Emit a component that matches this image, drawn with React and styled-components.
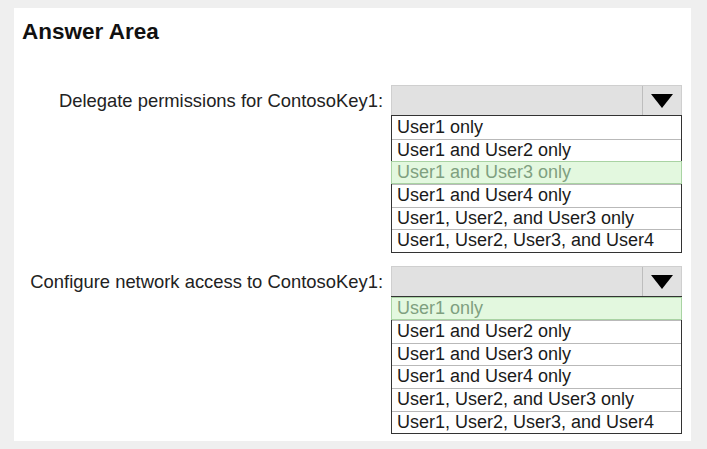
import React from 'react'
import styled, { createGlobalStyle } from 'styled-components'

const GlobalStyle = createGlobalStyle`
  html, body {
    margin: 0;
    padding: 0;
    background: #efefef;
    font-family: 'Liberation Sans', Arial, sans-serif;
  }
`

const Page = styled.div`
  width: 707px;
  height: 449px;
  padding: 8px 16px 8px 14px;
  box-sizing: border-box;
`

const Panel = styled.div`
  background: #fff;
  height: 100%;
  padding: 11px 0 0 8px;
  box-sizing: border-box;
`

const Title = styled.h2`
  margin: 0;
  font-size: 22.5px;
  font-weight: bold;
  color: #111;
`

const Form = styled.div`
  display: grid;
  grid-template-columns: 361px 291px;
  column-gap: 8px;
  row-gap: 13px;
  margin-top: 40px;
  align-items: start;
`

const Label = styled.div`
  text-align: right;
  font-size: 18.4px;
  color: #222;
  padding-top: 5px;
  white-space: nowrap;
`

const Select = styled.div`
  display: flex;
  flex-direction: column;
`

const Header = styled.div`
  display: flex;
  height: 30px;
  background: #e1e1e1;
  border: 1px solid #cfcfcf;
  border-bottom: none;
  box-sizing: border-box;
`

const Field = styled.div`
  flex: 1;
`

const ArrowCell = styled.div`
  width: 38px;
  border-left: 1px solid #bdbdbd;
  display: flex;
  align-items: center;
  justify-content: center;
`

const List = styled.div`
  border: 1px solid #333;
  display: flex;
  flex-direction: column;
`

const Option = styled.div`
  height: 22.7px;
  line-height: 21px;
  padding-left: 5px;
  font-size: 18px;
  white-space: nowrap;
  box-sizing: border-box;
  color: ${p => (p.$picked ? '#7fa07f' : '#1a1a1a')};
  background: ${p => (p.$picked ? '#e3f8df' : '#fff')};
  border-top: 1px solid ${p => (p.$picked ? '#a9d3a3' : '#b9b9b9')};
  border-bottom: ${p => (p.$picked ? '1px solid #a9d3a3' : 'none')};
  border-left: ${p => (p.$picked ? '1px solid #a9d3a3' : 'none')};
  border-right: ${p => (p.$picked ? '1px solid #a9d3a3' : 'none')};
  margin: ${p => (p.$picked ? '0 -1px' : '0')};
  &:first-child {
    border-top-color: ${p => (p.$picked ? '#a9d3a3' : 'transparent')};
  }
`

const options = [
  'User1 only',
  'User1 and User2 only',
  'User1 and User3 only',
  'User1 and User4 only',
  'User1, User2, and User3 only',
  'User1, User2, User3, and User4'
]

function Dropdown ({ picked }) {
  return (
    <Select>
      <Header>
        <Field />
        <ArrowCell>
          <svg width="22" height="14" viewBox="0 0 22 14">
            <polygon points="0,0 22,0 11,14" fill="#000" />
          </svg>
        </ArrowCell>
      </Header>
      <List>
        {options.map((o, i) => (
          <Option key={o} $picked={i === picked}>{o}</Option>
        ))}
      </List>
    </Select>
  )
}

export default function App () {
  return (
    <>
      <GlobalStyle />
      <Page>
        <Panel>
          <Title>Answer Area</Title>
          <Form>
            <Label>Delegate permissions for ContosoKey1:</Label>
            <Dropdown picked={2} />
            <Label>Configure network access to ContosoKey1:</Label>
            <Dropdown picked={0} />
          </Form>
        </Panel>
      </Page>
    </>
  )
}
